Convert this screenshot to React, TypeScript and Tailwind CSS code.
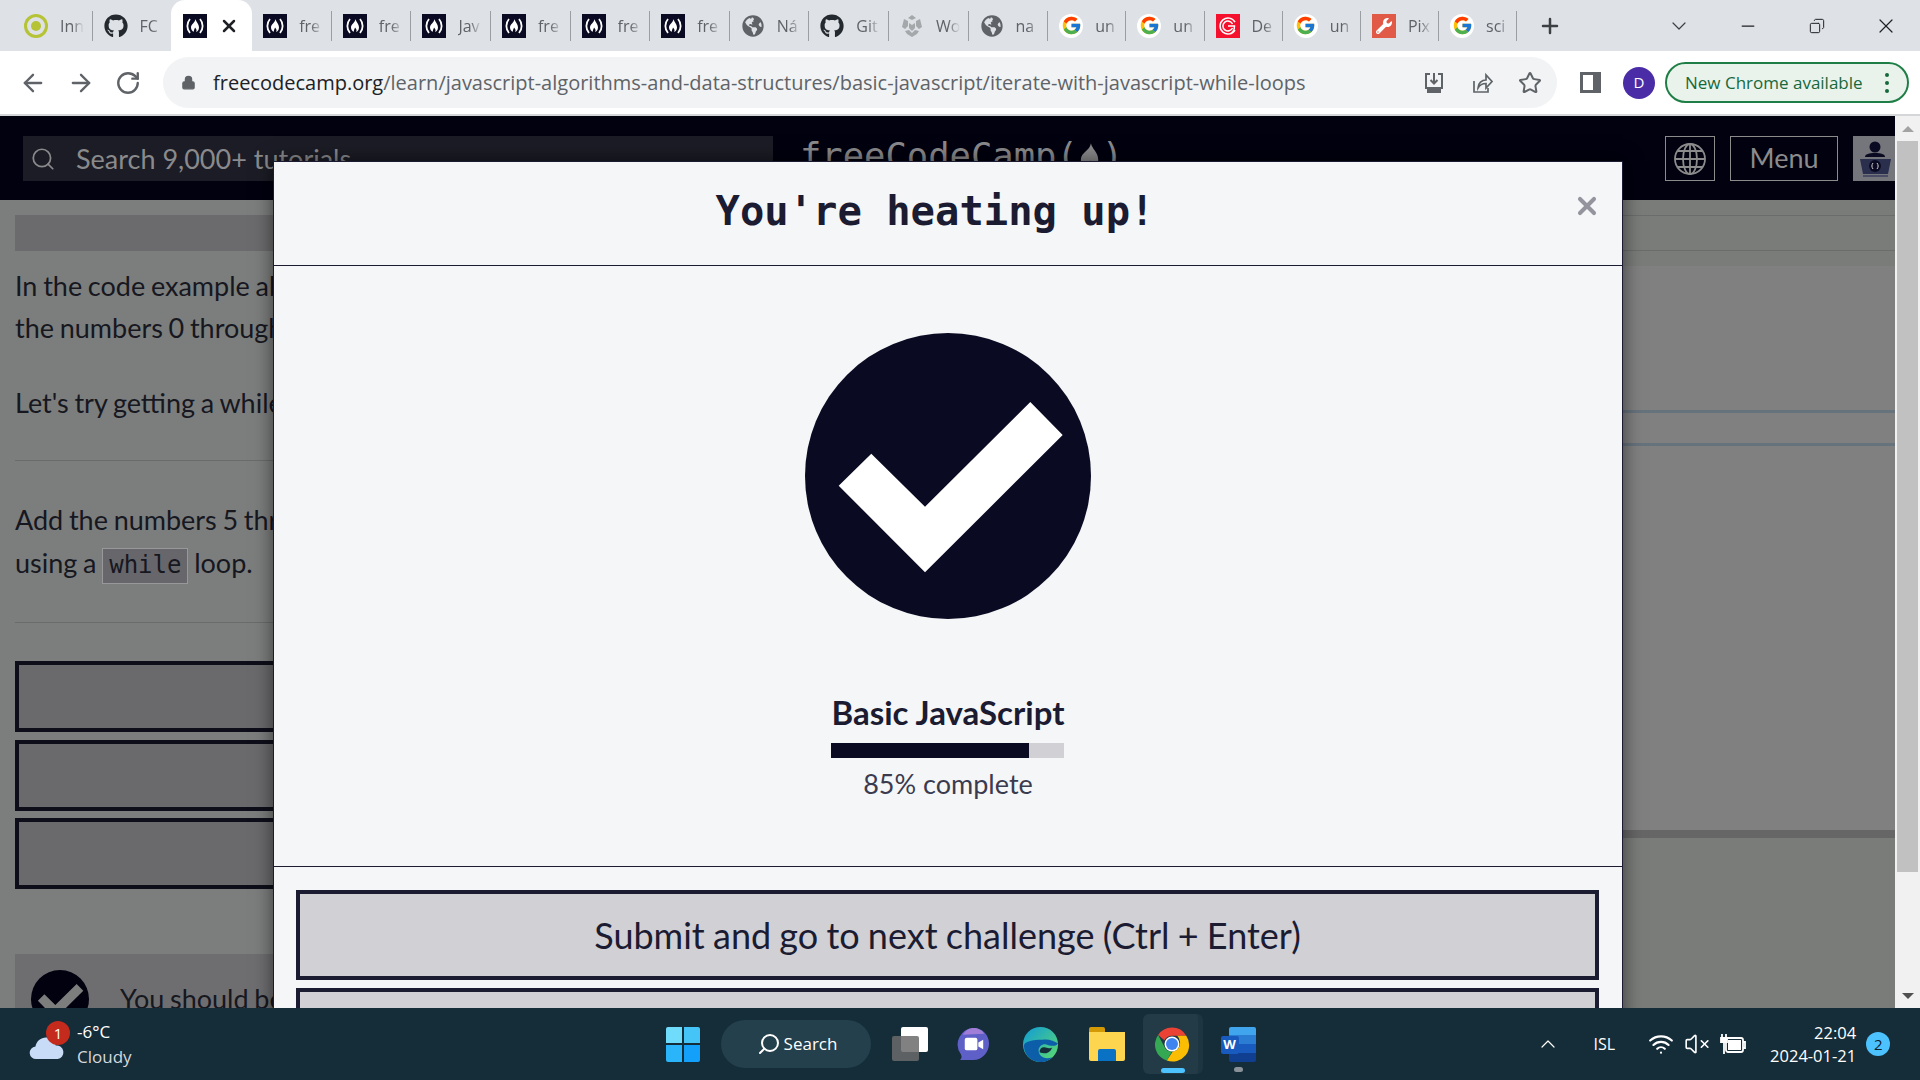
import React from 'react';
import { ArrowLeft, ArrowRight, RotateCw, Lock, Star, Plus, ChevronDown, Minus, X, Search, ChevronUp, Wifi, VolumeX, Copy } from 'lucide-react';
import { FaGithub, FaGlobeAmericas, FaWrench } from 'react-icons/fa';
import { FcGoogle } from 'react-icons/fc';

type TabKind = 'ring' | 'github' | 'fcc' | 'globe' | 'unity' | 'google' | 'red' | 'wrench';

const tabs: { kind: TabKind; label: string; active?: boolean }[] = [
  { kind: 'ring', label: 'Inn' },
  { kind: 'github', label: 'FC' },
  { kind: 'fcc', label: '', active: true },
  { kind: 'fcc', label: 'fre' },
  { kind: 'fcc', label: 'fre' },
  { kind: 'fcc', label: 'Jav' },
  { kind: 'fcc', label: 'fre' },
  { kind: 'fcc', label: 'fre' },
  { kind: 'fcc', label: 'fre' },
  { kind: 'globe', label: 'Ná' },
  { kind: 'github', label: 'Git' },
  { kind: 'unity', label: 'Wo' },
  { kind: 'globe', label: 'na' },
  { kind: 'google', label: 'un' },
  { kind: 'google', label: 'un' },
  { kind: 'red', label: 'De' },
  { kind: 'google', label: 'un' },
  { kind: 'wrench', label: 'Pix' },
  { kind: 'google', label: 'sci' },
];

function FccIcon() {
  return (
    <svg viewBox="0 0 24 24" className="w-6 h-6 bg-[#0a0a23]">
      <path d="M7 5C3.500 9 3.500 15 7 19M17 5c3.500 4 3.500 10 0 14" fill="none" stroke="#fff" strokeWidth="1.800" />
      <path d="M12.500 5c.5 3 3.500 5 3.500 8.500 0 2.500-1.500 4-3 4.500 1-1.500.6-3-1-4.500-.3 1.500-1 2-1.200 4.300-1.500-.6-2.800-2.200-2.800-4.300 0-3.500 4-4.500 4.500-8.500z" fill="#fff" />
    </svg>
  );
}

function TabIcon({ kind }: { kind: TabKind }) {
  if (kind === 'fcc') return <FccIcon />;
  if (kind === 'github') return <FaGithub className="w-6 h-6 text-[#24292f]" />;
  if (kind === 'globe') return <FaGlobeAmericas className="w-[22px] h-[22px] mx-px text-[#5f6368]" />;
  if (kind === 'google') {
    return (
      <div className="w-6 h-6 rounded-full bg-white flex items-center justify-center">
        <FcGoogle className="w-[21px] h-[21px]" />
      </div>
    );
  }
  if (kind === 'wrench') {
    return (
      <div className="w-6 h-6 bg-[#e05a47] flex items-center justify-center">
        <FaWrench className="w-4 h-4 text-white" />
      </div>
    );
  }
  if (kind === 'red') {
    return (
      <svg viewBox="0 0 24 24" className="w-6 h-6 bg-[#f5112e]">
        <path d="M19 16a8 8 0 1 1 0-8M16.500 14a5 5 0 1 1 0-4M12 12h6.500c0 4-2 7-5 8" fill="none" stroke="#fff" strokeWidth="1.500" />
      </svg>
    );
  }
  if (kind === 'unity') {
    return (
      <svg viewBox="0 0 24 24" className="w-6 h-6">
        <path d="M12 1l4 3-4 2-4-2zM4 5l4 2v5l-3 3-3-2zM20 5l-4 2v5l3 3 3-2zM9 9l3 2 3-2v5l-3 3-3-3zM5 17l4-1 3 3v4l-5-3zM19 17l-4-1-3 3v4l5-3z" fill="#a5a8ab" />
      </svg>
    );
  }
  return (
    <div className="w-6 h-6 rounded-full bg-[#b5c334] flex items-center justify-center">
      <div className="w-[18px] h-[18px] rounded-full bg-[#dee1e6] flex items-center justify-center">
        <div className="w-[10px] h-[10px] rounded-full bg-[#b5c334]" />
      </div>
    </div>
  );
}

function TabStrip() {
  return (
    <div className="h-[51px] shrink-0 bg-[#dee1e6] flex pl-[13px]">
      {tabs.map((tab, i) => (
        <div
          key={i}
          className={
            tab.active
              ? 'w-[81px] -ml-px shrink-0 h-[51px] bg-white rounded-t-[14px] flex items-center pl-[12px]'
              : i < 13
                ? 'w-[79.6px] shrink-0 h-[51px] flex items-center pl-[11px] relative'
                : 'w-[78.2px] shrink-0 h-[51px] flex items-center pl-[11px] relative'
          }
        >
          <TabIcon kind={tab.kind} />
          {tab.active ? (
            <X className="w-5 h-5 ml-[12px] text-[#202124]" strokeWidth={3} />
          ) : (
            <span className="ml-[12px] w-[24px] overflow-hidden whitespace-nowrap text-[16px] text-[#5f6368] font-['Open_Sans',sans-serif] [mask-image:linear-gradient(to_right,black_50%,transparent)]">
              {tab.label}
            </span>
          )}
          {!tab.active && !(tabs[i + 1] && tabs[i + 1].active) && (
            <div className="absolute right-0 top-[11px] h-[30px] w-px bg-[#9b9ea3]" />
          )}
        </div>
      ))}
      <div className="w-[66px] flex items-center justify-center">
        <Plus className="w-6 h-6 text-[#3c4043]" strokeWidth={2.500} />
      </div>
      <div className="ml-auto flex items-center">
        <div className="w-[69px] flex justify-center"><ChevronDown className="w-6 h-6 text-[#3c4043]" strokeWidth={1.200} /></div>
        <div className="w-[69px] flex justify-center"><Minus className="w-5 h-5 text-[#202124]" strokeWidth={1.500} /></div>
        <div className="w-[69px] flex justify-center"><Copy className="w-4 h-5 text-[#202124] -scale-x-100" strokeWidth={1.500} /></div>
        <div className="w-[69px] flex justify-center"><X className="w-6 h-6 text-[#202124]" strokeWidth={1.200} /></div>
      </div>
    </div>
  );
}

function AddressBar() {
  return (
    <div className="h-[65px] shrink-0 bg-white border-b-2 border-[#d5d6d8] flex items-center text-[#5f6368]">
      <div className="w-[163px] flex items-center pl-[19px] gap-[20px]">
        <ArrowLeft className="w-7 h-7" strokeWidth={2} />
        <ArrowRight className="w-7 h-7" strokeWidth={2} />
        <RotateCw className="w-[26px] h-[26px]" strokeWidth={2.200} />
      </div>
      <div className="w-[1394px] h-[51px] bg-[#f1f3f4] rounded-full flex items-center pl-[18px] pr-[15px] font-['Open_Sans',sans-serif]">
        <Lock className="w-[15px] h-[17px] fill-[#5f6368]" strokeWidth={2} />
        <div className="ml-[17px] text-[20px] whitespace-nowrap text-[#5f6368]">
          <span className="text-[#202124]">freecodecamp.org</span>
          /learn/javascript-algorithms-and-data-structures/basic-javascript/iterate-with-javascript-while-loops
        </div>
        <div className="ml-auto flex items-center gap-[24px]">
          <svg viewBox="0 0 24 24" className="w-6 h-6" fill="none" stroke="#5f6368" strokeWidth="2">
            <path d="M8 3H4v14h16V3h-4M12 2v10M8.500 9l3.500 3.500L15.500 9" />
            <path d="M6 17v4h12v-4" fill="#5f6368" />
          </svg>
          <svg viewBox="0 0 24 24" className="w-6 h-6" fill="none" stroke="#5f6368" strokeWidth="1.700">
            <path d="M4 10v11h14v-4" />
            <path d="M8 17c0-5 4-8 8-8V4l6 6.500-6 6.500v-4.500c-4 0-6 1-8 4.500z" />
          </svg>
          <Star className="w-6 h-6" strokeWidth={2} />
        </div>
      </div>
      <div className="w-[21px] h-[21px] ml-[23px] border-[3px] border-r-[8px] border-[#5f6368]" />
      <div className="w-8 h-8 ml-[22px] rounded-full bg-[#4a2da6] text-white text-[15px] flex items-center justify-center font-['Open_Sans',sans-serif]">
        D
      </div>
      <div className="w-[244px] h-[41px] ml-[10px] rounded-full border-2 border-[#1e7e45] bg-[#e9f3ec] flex items-center pl-[18px] text-[#17683a] text-[17px] font-['Open_Sans',sans-serif] whitespace-nowrap">
        New Chrome available
        <div className="ml-auto mr-[18px] flex flex-col gap-[4px]">
          <span className="w-1 h-1 rounded-full bg-[#17683a]" />
          <span className="w-1 h-1 rounded-full bg-[#17683a]" />
          <span className="w-1 h-1 rounded-full bg-[#17683a]" />
        </div>
      </div>
    </div>
  );
}

function NavBar() {
  return (
    <div className="h-[84px] shrink-0 bg-[#01010f] flex items-start pt-[20px] font-['Lato',sans-serif]">
      <div className="ml-[23px] w-[750px] h-[45px] bg-[#1b1c25] flex items-center pl-[7px] text-[#8a8a8c]">
        <Search className="w-[26px] h-[26px]" strokeWidth={1.600} />
        <span className="ml-[20px] mt-[2px] text-[27px] whitespace-nowrap">Search 9,000+ tutorials</span>
      </div>
      <div className="ml-[27px] flex items-center h-[39px] text-[35.500px] text-[#8a8a8c] font-['DejaVu_Sans_Mono',monospace] whitespace-nowrap">
        freeCodeCamp(
        <svg viewBox="0 0 24 30" className="w-[22px] h-[30px] mx-px" fill="#8a8a8c">
          <path d="M13 1c1 6 8 10 8 18 0 5-3 9-7 10 2-3 1-6-2-9-.5 3-2 4-3 9-4-1-7-5-7-10 0-8 10-10 11-18z" />
        </svg>
        )
      </div>
      <div className="ml-auto w-[50px] h-[45px] border border-[#8b8b8b] flex items-center justify-center">
        <svg viewBox="0 0 32 32" className="w-8 h-8" fill="none" stroke="#8b8b8b" strokeWidth="1.800">
          <circle cx="16" cy="16" r="15" />
          <ellipse cx="16" cy="16" rx="7" ry="15" />
          <path d="M16 1v30M1 16h30M3.500 8h25M3.500 24h25" />
        </svg>
      </div>
      <div className="ml-[15px] w-[108px] h-[45px] border border-[#8b8b8b] flex items-center justify-center text-[27px] text-[#8b8b8b]">
        Menu
      </div>
      <div className="ml-[15px] w-[42px] h-[45px] bg-[#75757c]">
        <svg viewBox="0 0 42 45" className="w-[42px] h-[45px]">
          <circle cx="22" cy="11" r="5.500" fill="#0a0a23" />
          <path d="M12 21c0-3 4-4 10-4s10 1 10 4z" fill="#0a0a23" />
          <path d="M7 23h31l-3 15H10z" fill="#2b2f4e" />
          <circle cx="22" cy="30" r="6" fill="#0a0a23" />
          <path d="M20 27c-1.500 2-1.500 4 0 6M24 27c1.500 2 1.500 4 0 6" stroke="#d0d0d5" strokeWidth="1" fill="none" />
          <path d="M10 40h25" stroke="#3b3f5c" strokeWidth="1.500" />
        </svg>
      </div>
    </div>
  );
}

function LessonPane() {
  return (
    <div className="w-[1000px] shrink-0 h-full px-[15px] pt-[15px] bg-[#7c7e7d] text-[#16171f] text-[27px] leading-[42px] [word-spacing:-1.200px] font-['Lato',sans-serif] whitespace-nowrap overflow-hidden">
      <div className="h-[36px] bg-[#6b6b6d]" />
      <p className="mt-[14px]">
        In the code example above, the while loop will execute 5 times
        <br />
        the numbers 0 through 4 to ourArray.
      </p>
      <p className="mt-[33px]">Let's try getting a while loop to work.</p>
      <div className="mt-[36px] h-px bg-[#6a6c6b]" />
      <p className="mt-[37px] leading-[43px]">
        Add the numbers 5 through 0 to myArray
        <br />
        using a{' '}
        <code className="inline-block h-[36px] leading-[32px] px-[6px] border border-[#98989b] bg-[#66666b] text-[24px] font-['DejaVu_Sans_Mono',monospace]">
          while
        </code>{' '}
        loop.
      </p>
      <div className="mt-[38px] h-px bg-[#6a6c6b]" />
      <div className="mt-[38px] flex flex-col gap-[7.500px]">
        <div className="h-[71px] border-4 border-[#0e0e1a] bg-[#6a6a6d]" />
        <div className="h-[71px] border-4 border-[#0e0e1a] bg-[#6a6a6d]" />
        <div className="h-[71px] border-4 border-[#0e0e1a] bg-[#6a6a6d]" />
      </div>
      <div className="mt-[65px] h-[80px] bg-[#6e6e70] flex pl-[16px] pt-[16px]">
        <svg viewBox="0 0 286 286" className="w-[58px] h-[58px] shrink-0">
          <circle cx="143" cy="143" r="143" fill="#01010f" />
          <path d="M225 69l33 33-138 137-86-87 32-32 54 53z" fill="#7c7e7d" />
        </svg>
        <span className="ml-[31px] mt-[8px]">You should be using a while loop</span>
      </div>
    </div>
  );
}

function EditorPane() {
  return (
    <div className="flex-1 min-w-0 flex flex-col bg-[#808080]">
      <div className="h-[66px] bg-[#7a7c7a] pt-[15px]">
        <div className="h-[36px] border-y border-[#6a6d6b]" />
      </div>
      <div className="h-[564px] pt-[144px]">
        <div className="h-[3px] bg-[#66727c]" />
        <div className="h-[3px] mt-[30px] bg-[#66727c]" />
      </div>
      <div className="h-[8px] bg-[#666666]" />
      <div className="flex-1 bg-[#7a7c7a]" />
    </div>
  );
}

function Scrollbar() {
  return (
    <div className="w-[25px] shrink-0 bg-[#f1f1f1] flex flex-col items-center">
      <div className="h-[25px] flex items-center justify-center">
        <div className="w-0 h-0 border-x-[6px] border-x-transparent border-b-[6px] border-b-[#a3a3a3]" />
      </div>
      <div className="h-[731px] w-[21px] bg-[#c1c1c1]" />
      <div className="mt-auto h-[25px] flex items-center justify-center">
        <div className="w-0 h-0 border-x-[6px] border-x-transparent border-t-[6px] border-t-[#505050]" />
      </div>
    </div>
  );
}

function CompletionModal() {
  return (
    <div className="absolute left-[273px] top-[45px] w-[1350px] bg-[#f5f6f7] border-x border-t border-[#1b1b32] shadow-[0_0_18px_rgba(0,0,0,0.55)] text-[#1b1b32] font-['Lato',sans-serif]">
      <div className="h-[104px] border-b border-[#1b1b32] relative flex items-center justify-center pr-[26px] pb-[4px]">
        <h2 className="text-[40.500px] font-bold font-['DejaVu_Sans_Mono',monospace]">You're heating up!</h2>
        <span className="absolute right-[21px] top-[30px] text-[#94949f]">
          <X className="w-[28px] h-[28px]" strokeWidth={3.500} />
        </span>
      </div>
      <div className="h-[600px] flex flex-col items-center pt-[67px]">
        <svg viewBox="0 0 286 286" className="w-[286px] h-[286px]">
          <circle cx="143" cy="143" r="143" fill="#0a0a23" />
          <path d="M225.300 69l32.400 33L120 239.300 33.700 152.700l32.600-32L120 173.700z" fill="#fff" />
        </svg>
        <div className="mt-[73px] text-[33px] leading-[40px] font-bold">Basic JavaScript</div>
        <div className="mt-[11px] mr-px w-[233px] h-[15px] bg-[#d0d0d5]">
          <div className="h-full w-[85%] bg-[#0a0a23]" />
        </div>
        <div className="mt-[9px] text-[27px] leading-[34px] text-[#3b3b4f]">85% complete</div>
      </div>
      <div className="border-t border-[#1b1b32] pl-[22px] pr-[23px] pt-[23px] flex flex-col gap-[8px]">
        <div className="h-[90px] border-4 border-[#1b1b32] bg-[#d0d0d5] flex items-center justify-center text-[36px] [word-spacing:-1px]">
          Submit and go to next challenge (Ctrl + Enter)
        </div>
        <div className="h-[90px] border-4 border-[#1b1b32] bg-[#d0d0d5]" />
      </div>
    </div>
  );
}

function ChromeLogo() {
  return (
    <svg viewBox="0 0 48 48" className="w-[36px] h-[36px]">
      <path d="M24 2a22 22 0 0 1 19 11H24a11 11 0 0 0-10 6L5.500 12A22 22 0 0 1 24 2z" fill="#ea4335" />
      <path d="M5.500 12L14 28a11 11 0 0 0 10 6l-7 12A22 22 0 0 1 5.500 12z" fill="#34a853" />
      <path d="M43 13a22 22 0 0 1-26 33l8-12a11 11 0 0 0 9-15 11 11 0 0 0-3-6z" fill="#fbbc04" />
      <circle cx="24" cy="24" r="10" fill="#fff" />
      <circle cx="24" cy="24" r="8" fill="#3f83f0" />
    </svg>
  );
}

function Taskbar() {
  return (
    <div className="h-[72px] shrink-0 bg-[#152c39] flex items-center text-white font-['Open_Sans',sans-serif] relative">
      <div className="ml-[28px] w-[38px] h-[36px] relative">
        <svg viewBox="0 0 36 26" className="absolute left-0 top-[9px] w-[38px] h-[25px]">
          <path d="M7 25a6.500 6.500 0 0 1-1-13C7 5 14 1 20 3c4 1 7 4 7 8a7 7 0 0 1 2 14z" fill="#c9dcf7" />
        </svg>
        <div className="absolute left-[18px] top-[-5px] w-6 h-6 rounded-full bg-[#c42b1c] text-[15px] flex items-center justify-center">1</div>
      </div>
      <div className="ml-[11px] text-[17px] leading-[25px]">
        <div>-6°C</div>
        <div className="text-[#d5d9dc]">Cloudy</div>
      </div>
      <div className="ml-[534px] w-[34px] h-[35px] grid grid-cols-2 gap-[2px]">
        <div className="bg-[#6fdcfb] rounded-tl-[2px]" />
        <div className="bg-[#45c5f7] rounded-tr-[2px]" />
        <div className="bg-[#2ab4fa] rounded-bl-[2px]" />
        <div className="bg-[#12a0fb] rounded-br-[2px]" />
      </div>
      <div className="ml-[21px] w-[150px] h-[48px] rounded-full bg-[#24404d] flex items-center pl-[36px] text-[17px]">
        <Search className="w-[24px] h-[24px] -scale-x-100" strokeWidth={2} />
        <span className="ml-[3px]">Search</span>
      </div>
      <div className="ml-[21px] w-[36px] h-[34px] relative">
        <div className="absolute right-0 top-0 w-[27px] h-[25px] rounded-[2px] bg-white" />
        <div className="absolute left-0 bottom-0 w-[27px] h-[25px] rounded-[2px] bg-[#6b6b6b]/85" />
      </div>
      <svg viewBox="0 0 34 36" className="ml-[29px] w-[33px] h-[35px]">
        <path d="M17 1c9 0 16 7 16 16s-7 17-16 17H3c2-2 2-3 1-6a17 17 0 0 1 13-27z" fill="#5f5fc8" />
        <path d="M6 8c3-5 7-7 11-7s9 2 11 6z" fill="#a07ed8" />
        <rect x="8" y="11" width="13" height="13" rx="2" fill="#fff" />
        <path d="M22 16l5-3v10l-5-3z" fill="#fff" />
      </svg>
      <svg viewBox="0 0 38 38" className="ml-[32px] w-[37px] h-[37px]">
        <defs>
          <linearGradient id="edgeTop" x1="0" y1="0" x2="1" y2="1">
            <stop offset="0" stopColor="#0f9ad8" />
            <stop offset="1" stopColor="#5fdd6a" />
          </linearGradient>
        </defs>
        <circle cx="19" cy="19" r="18" fill="url(#edgeTop)" />
        <path d="M2 20c0 10 8 17 17 17 6 0 9-2 12-5-8 3-14-1-14-7 0-4 4-7 8-6 3 1 10 3 12-1-4-3-10-5-16-4-10 0-19 2-19 6z" fill="#0d5ea8" />
        <path d="M18 27c0-4 3-6 6-5 4 1 6 1 7 0-1 3-4 6-7 6-2 0-4 0-6-1z" fill="#152c39" />
      </svg>
      <div className="ml-[30px] w-[36px] h-[34px] flex flex-col">
        <div className="w-[16px] h-[5px] bg-[#d49a06] rounded-t-[2px]" />
        <div className="flex-1 bg-[#fdd54f] rounded-b-[2px] flex items-end justify-center">
          <div className="w-[18px] h-[12px] bg-[#0a72c4] rounded-t-[2px]" />
        </div>
      </div>
      <div className="ml-[18px] w-[60px] h-[60px] relative rounded-[6px] bg-[#233a47] border-r-[5px] border-[#1d3441] flex items-center justify-center pl-[4px]">
        <ChromeLogo />
        <div className="absolute bottom-[1px] left-[18px] w-[24px] h-[5px] rounded-full bg-[#4cc2ff]" />
      </div>
      <div className="ml-[18px] w-[35px] h-[35px] relative">
        <div className="absolute right-0 top-0 w-[27px] h-[35px] rounded-[2px] overflow-hidden flex flex-col">
          <div className="flex-1 bg-[#41a5ee]" />
          <div className="flex-1 bg-[#2b7cd3]" />
          <div className="flex-1 bg-[#185abd]" />
          <div className="flex-1 bg-[#103f91]" />
        </div>
        <div className="absolute left-0 top-[9px] w-[18px] h-[18px] rounded-[2px] bg-[#185abd] text-[13px] font-bold flex items-center justify-center">W</div>
        <div className="absolute left-[13px] top-[40px] w-[9px] h-[5px] rounded-full bg-[#8a9299]" />
      </div>
      <ChevronUp className="ml-[280px] w-[24px] h-[24px]" strokeWidth={1.200} />
      <span className="ml-[34px] text-[16px]">ISL</span>
      <Wifi className="ml-[33px] w-[26px] h-[26px]" strokeWidth={2} />
      <VolumeX className="ml-[10px] w-[26px] h-[26px]" strokeWidth={1.500} />
      <svg viewBox="0 0 26 22" className="ml-[10px] w-[26px] h-[22px]" fill="none" stroke="#fff" strokeWidth="1.800">
        <rect x="6" y="5" width="17" height="14" rx="2" />
        <path d="M23 9h2v6h-2" />
        <path d="M2 1v4M6 1v4M1 5h6v4H1zM4 9v12" fill="#fff" />
        <rect x="8" y="7" width="13" height="10" fill="#fff" stroke="none" />
      </svg>
      <div className="ml-[20px] w-[90px] text-right text-[16.500px] leading-[23px] whitespace-nowrap">
        <div>22:04</div>
        <div>2024-01-21</div>
      </div>
      <div className="ml-[10px] w-6 h-6 rounded-full bg-[#4cc2ff] text-[#10202a] text-[15px] flex items-center justify-center">2</div>
    </div>
  );
}

export default function App() {
  return (
    <div className="w-screen h-screen overflow-hidden flex flex-col">
      <TabStrip />
      <AddressBar />
      <div className="flex-1 min-h-0 relative overflow-hidden flex">
        <div className="flex-1 min-w-0 flex flex-col">
          <NavBar />
          <div className="flex-1 min-h-0 flex">
            <LessonPane />
            <EditorPane />
          </div>
        </div>
        <Scrollbar />
        <CompletionModal />
      </div>
      <Taskbar />
    </div>
  );
}
